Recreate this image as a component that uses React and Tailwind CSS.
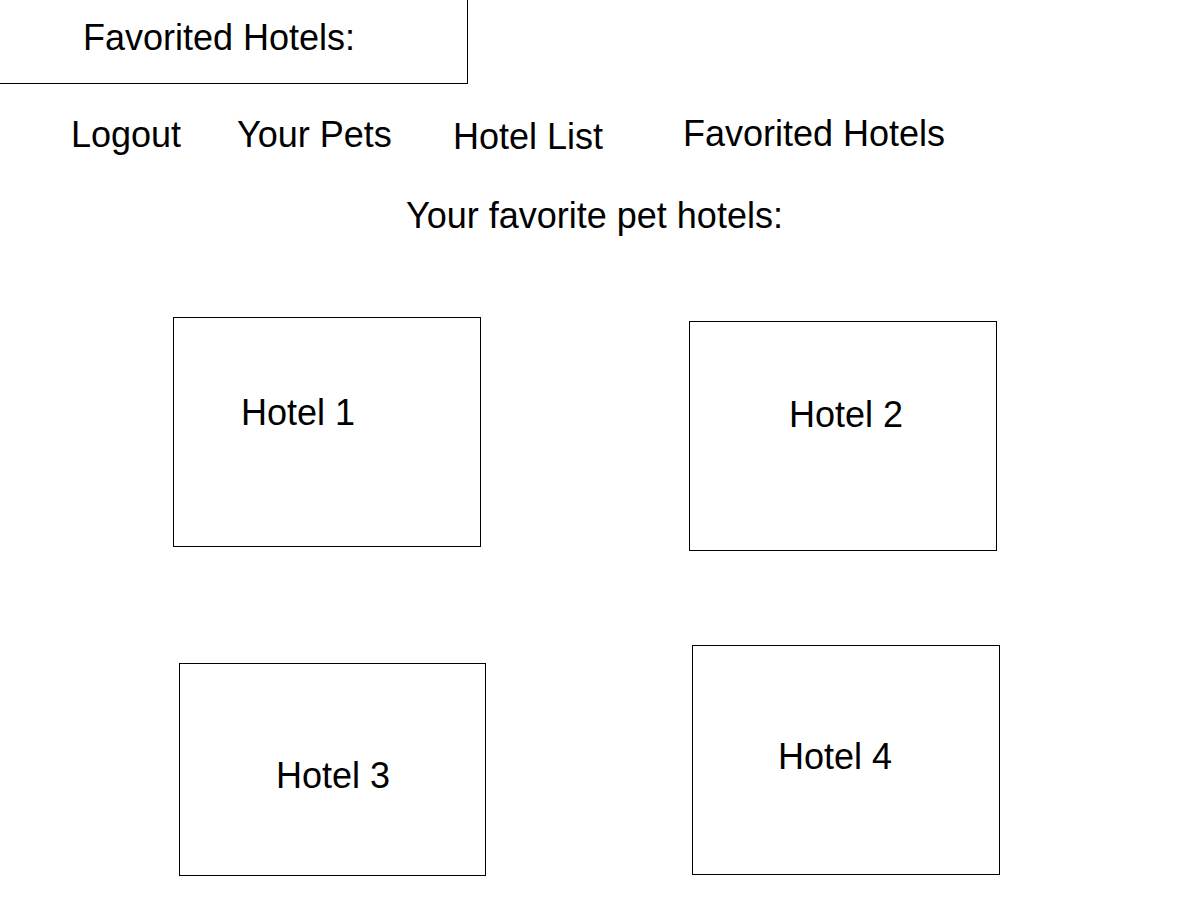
import React from 'react';

const navLinks = [
    { label: 'Logout', slot: 'w-[166px] mt-[33px]' },
    { label: 'Your Pets', slot: 'w-[216px] mt-[33px]' },
    { label: 'Hotel List', slot: 'w-[230px] mt-[35px]' },
    { label: 'Favorited Hotels', slot: 'mt-[32px]' },
];

const HotelCard = ({ name, box, text }) => (
    <div className={`shrink-0 border border-black ${box}`}>
        <p className={`leading-none ${text}`}>{name}</p>
    </div>
);

const FavoritedHotels = () => {
    return (
        <div className="min-h-[900px] w-[1200px] bg-white text-black text-[36px] font-['Liberation_Sans',Arial,sans-serif]">
            {/* page title box */}
            <div className="w-[468px] h-[84px] border-r border-b border-black pl-[83px] pt-[20px]">
                <h1 className="leading-none">Favorited Hotels:</h1>
            </div>

            {/* nav */}
            <nav className="flex items-start pl-[71px]">
                {navLinks.map((link) => (
                    <div key={link.label} className={`shrink-0 leading-none cursor-pointer ${link.slot}`}>
                        {link.label}
                    </div>
                ))}
            </nav>

            <h2 className="mt-[43px] pl-[406px] leading-none">Your favorite pet hotels:</h2>

            <div className="flex items-start pl-[173px]">
                <HotelCard name="Hotel 1" box="w-[308px] h-[230px] mt-[83px]" text="pt-[77px] pl-[67px]" />
                <HotelCard name="Hotel 2" box="w-[308px] h-[230px] mt-[87px] ml-[208px]" text="pt-[75px] pl-[99px]" />
            </div>

            <div className="flex items-start pl-[179px]">
                <HotelCard name="Hotel 3" box="w-[307px] h-[213px] mt-[112px]" text="pt-[94px] pl-[96px]" />
                <HotelCard name="Hotel 4" box="w-[308px] h-[230px] mt-[94px] ml-[206px]" text="pt-[93px] pl-[85px]" />
            </div>
        </div>
    );
};

export default FavoritedHotels;
